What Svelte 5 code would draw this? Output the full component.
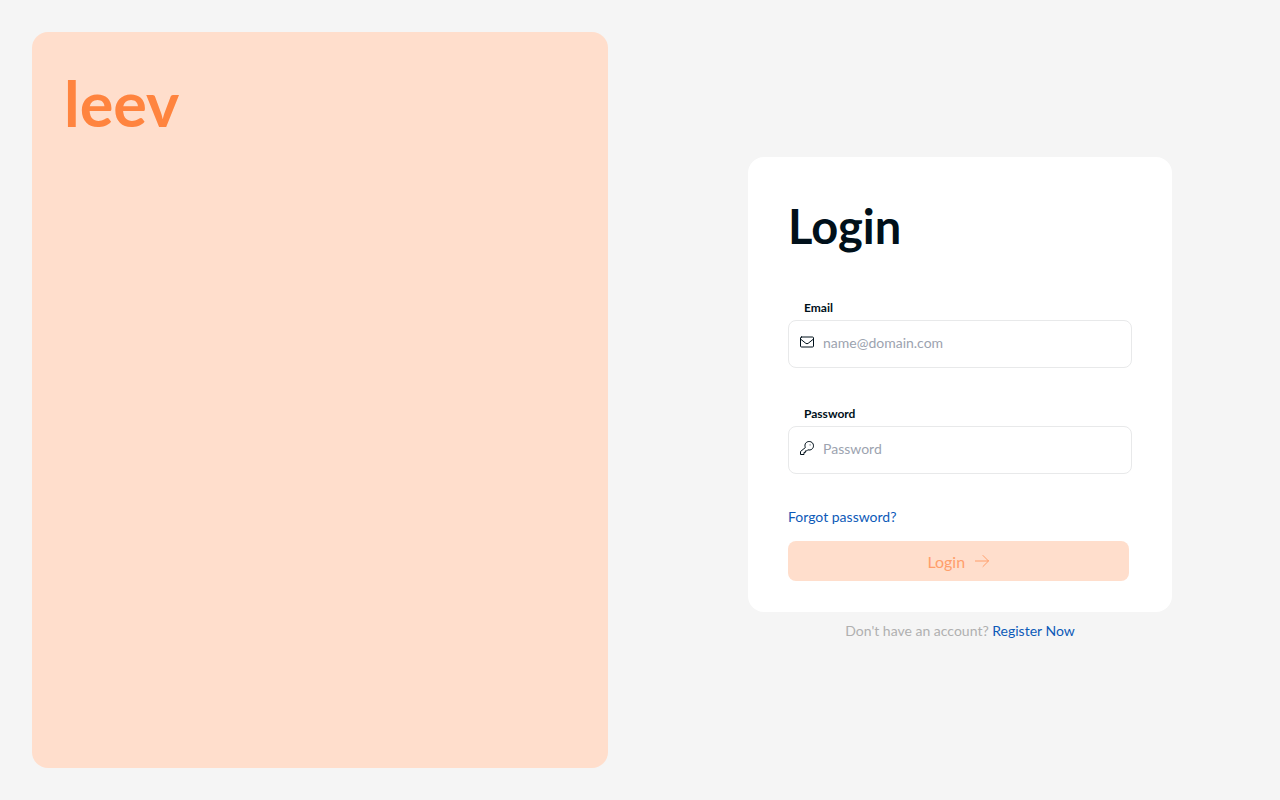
<script lang="ts">
  let email = $state("");
  let password = $state("");
  let ready = $derived(email.length > 0 && password.length > 0);

  function login(e: SubmitEvent) {
    e.preventDefault();
  }
</script>

<main class="page">
  <section class="banner">
    <span class="logo">leev</span>
  </section>

  <section class="content">
    <form class="card" onsubmit={login}>
      <h1>Login</h1>

      <div class="field">
        <label for="email">Email</label>
        <div class="input-box">
          <svg viewBox="0 0 14 14" aria-hidden="true">
            <rect x="0.5" y="2" width="13" height="10" rx="1" />
            <path d="M0.7 4.2 L5.8 8.3 Q7 9.2 8.2 8.3 L13.3 4.2" />
          </svg>
          <input id="email" type="email" placeholder="name@domain.com" bind:value={email} />
        </div>
      </div>

      <div class="field">
        <label for="password">Password</label>
        <div class="input-box">
          <svg viewBox="0 0 14 14" aria-hidden="true">
            <path d="M5.2 6.2 C4 2.9 6.3 0.5 9.2 0.5 C11.7 0.5 13.5 2.3 13.5 4.8 C13.5 7.6 11 9.7 7.8 8.8 L6.8 9.9 H5.4 V11.4 H4 V13.5 H0.5 V10.9 Z" />
            <circle class="dot" cx="10.1" cy="3.9" r="0.8" />
          </svg>
          <input id="password" type="password" placeholder="Password" bind:value={password} />
        </div>
      </div>

      <a class="forgot" href="#forgot">Forgot password?</a>

      <button type="submit" class:active={ready} disabled={!ready}>
        Login
        <svg viewBox="0 0 14 14" aria-hidden="true">
          <path d="M0 7 H13.5 M8 1.5 L13.5 7 L8 12.5" />
        </svg>
      </button>
    </form>

    <p class="register">Don't have an account? <a href="#register">Register Now</a></p>
  </section>
</main>

<style>
  :global(body) {
    background: #f5f5f5;
  }
  .page {
    display: grid;
    grid-template-columns: 1fr 1fr;
    min-height: 100vh;
    font-family: Lato, "Liberation Sans", sans-serif;
    font-size: 14px;
    color: #00101a;
  }
  .banner {
    margin: 32px;
    padding: 32px;
    background: #ffdecc;
    border-radius: 16px;
  }
  .logo {
    display: block;
    font-size: 63px;
    line-height: 78px;
    font-weight: 700;
    color: #ff843f;
  }
  .content {
    display: flex;
    flex-direction: column;
    align-items: center;
    justify-content: center;
  }
  .card {
    box-sizing: border-box;
    display: flex;
    flex-direction: column;
    width: 100%;
    max-width: 424px;
    padding: 40px 40px 31px;
    background: #fff;
    border-radius: 16px;
  }
  h1 {
    margin: 0 0 39px;
    font-size: 47px;
    line-height: 58px;
    font-weight: 700;
  }
  .field {
    display: flex;
    flex-direction: column;
    margin-bottom: 32px;
  }
  label {
    padding: 5px 16px 3px;
    font-size: 12px;
    line-height: 18px;
    font-weight: 700;
  }
  .input-box {
    box-sizing: border-box;
    display: flex;
    align-items: center;
    gap: 9px;
    height: 48px;
    padding: 0 11px 4px;
    border: 1px solid #e8e9ea;
    border-radius: 8px;
  }
  .input-box:focus-within {
    border-color: #ff843f;
  }
  svg {
    flex-shrink: 0;
    width: 14px;
    height: 14px;
    fill: none;
    stroke: currentColor;
    stroke-width: 1;
    stroke-linecap: round;
    stroke-linejoin: round;
  }
  .dot {
    fill: #99a1a9;
    stroke: none;
  }
  input {
    flex: 1;
    min-width: 0;
    padding: 0;
    border: 0;
    outline: 0;
    background: none;
    font: inherit;
    color: inherit;
  }
  input::placeholder {
    color: #9ca3af;
  }
  a {
    color: #0d5ab8;
    text-decoration: none;
  }
  .forgot {
    align-self: flex-start;
    margin-bottom: 13px;
    line-height: 22px;
  }
  button {
    display: flex;
    align-items: center;
    justify-content: center;
    gap: 10px;
    width: 99%;
    height: 40px;
    padding: 0;
    border: 0;
    border-radius: 8px;
    background: #ffdecc;
    font: inherit;
    font-size: 16px;
    color: #ff9e6b;
  }
  button.active {
    background: #ff843f;
    color: #fff;
    cursor: pointer;
  }
  .register {
    margin: 7px 0 0;
    line-height: 24px;
    color: #b0b0b0;
  }
</style>
